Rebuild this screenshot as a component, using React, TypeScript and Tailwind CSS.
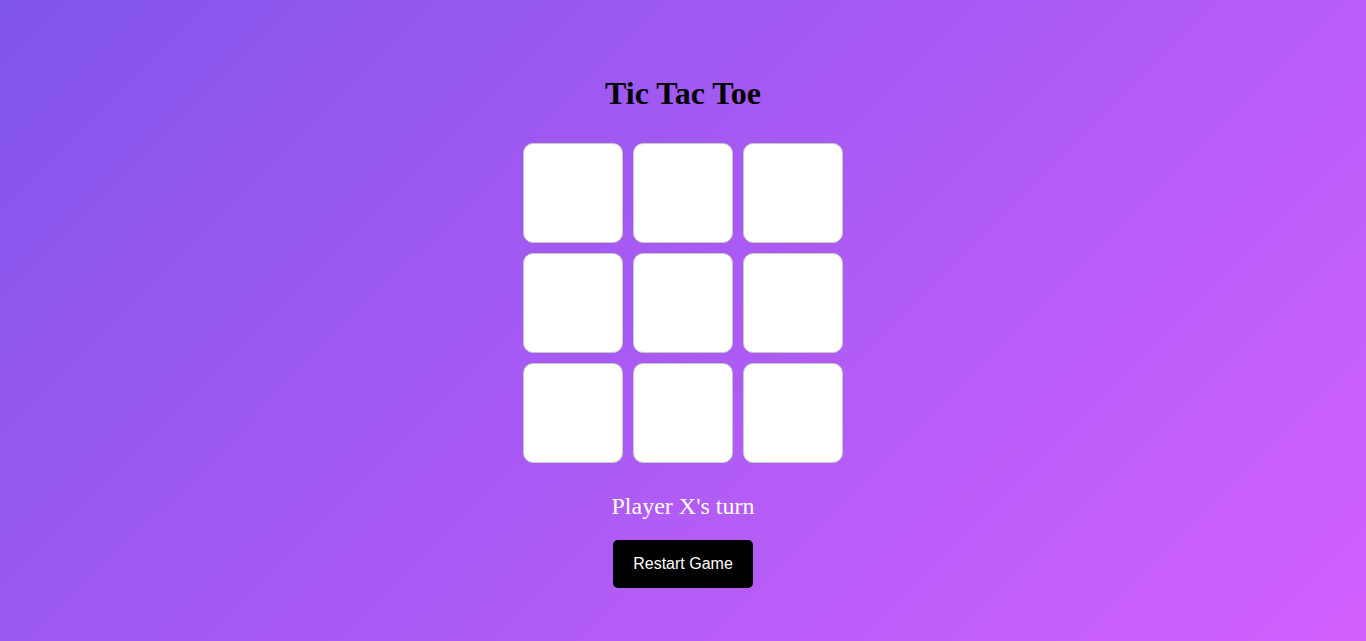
export default function App() {
  const cells = Array.from({ length: 9 });
  return (
    <div className="min-h-[641px] w-full bg-[linear-gradient(135deg,#8155eb,#d260fd)] flex flex-col items-center">
      {/* Title */}
      <h1 className="mt-[75px] text-[32px] leading-[37px] font-bold text-black font-['Liberation_Serif',serif]">
        Tic Tac Toe
      </h1>

      {/* Board */}
      <div className="mt-[31px] grid grid-cols-[100px_100px_100px] gap-[10px]">
        {cells.map((_, i) => (
          <button
            key={i}
            className="h-[100px] w-[100px] rounded-[10px] border border-[#c8c8c8] bg-white"
          />
        ))}
      </div>

      {/* Status */}
      <p className="mt-[29px] text-[24px] leading-[28px] text-white font-['Liberation_Serif',serif]">
        Player X's turn
      </p>

      <button className="mt-[20px] h-[48px] w-[140px] rounded-[5px] bg-black text-white text-[16px] font-['Liberation_Sans',sans-serif]">
        Restart Game
      </button>
    </div>
  );
}
